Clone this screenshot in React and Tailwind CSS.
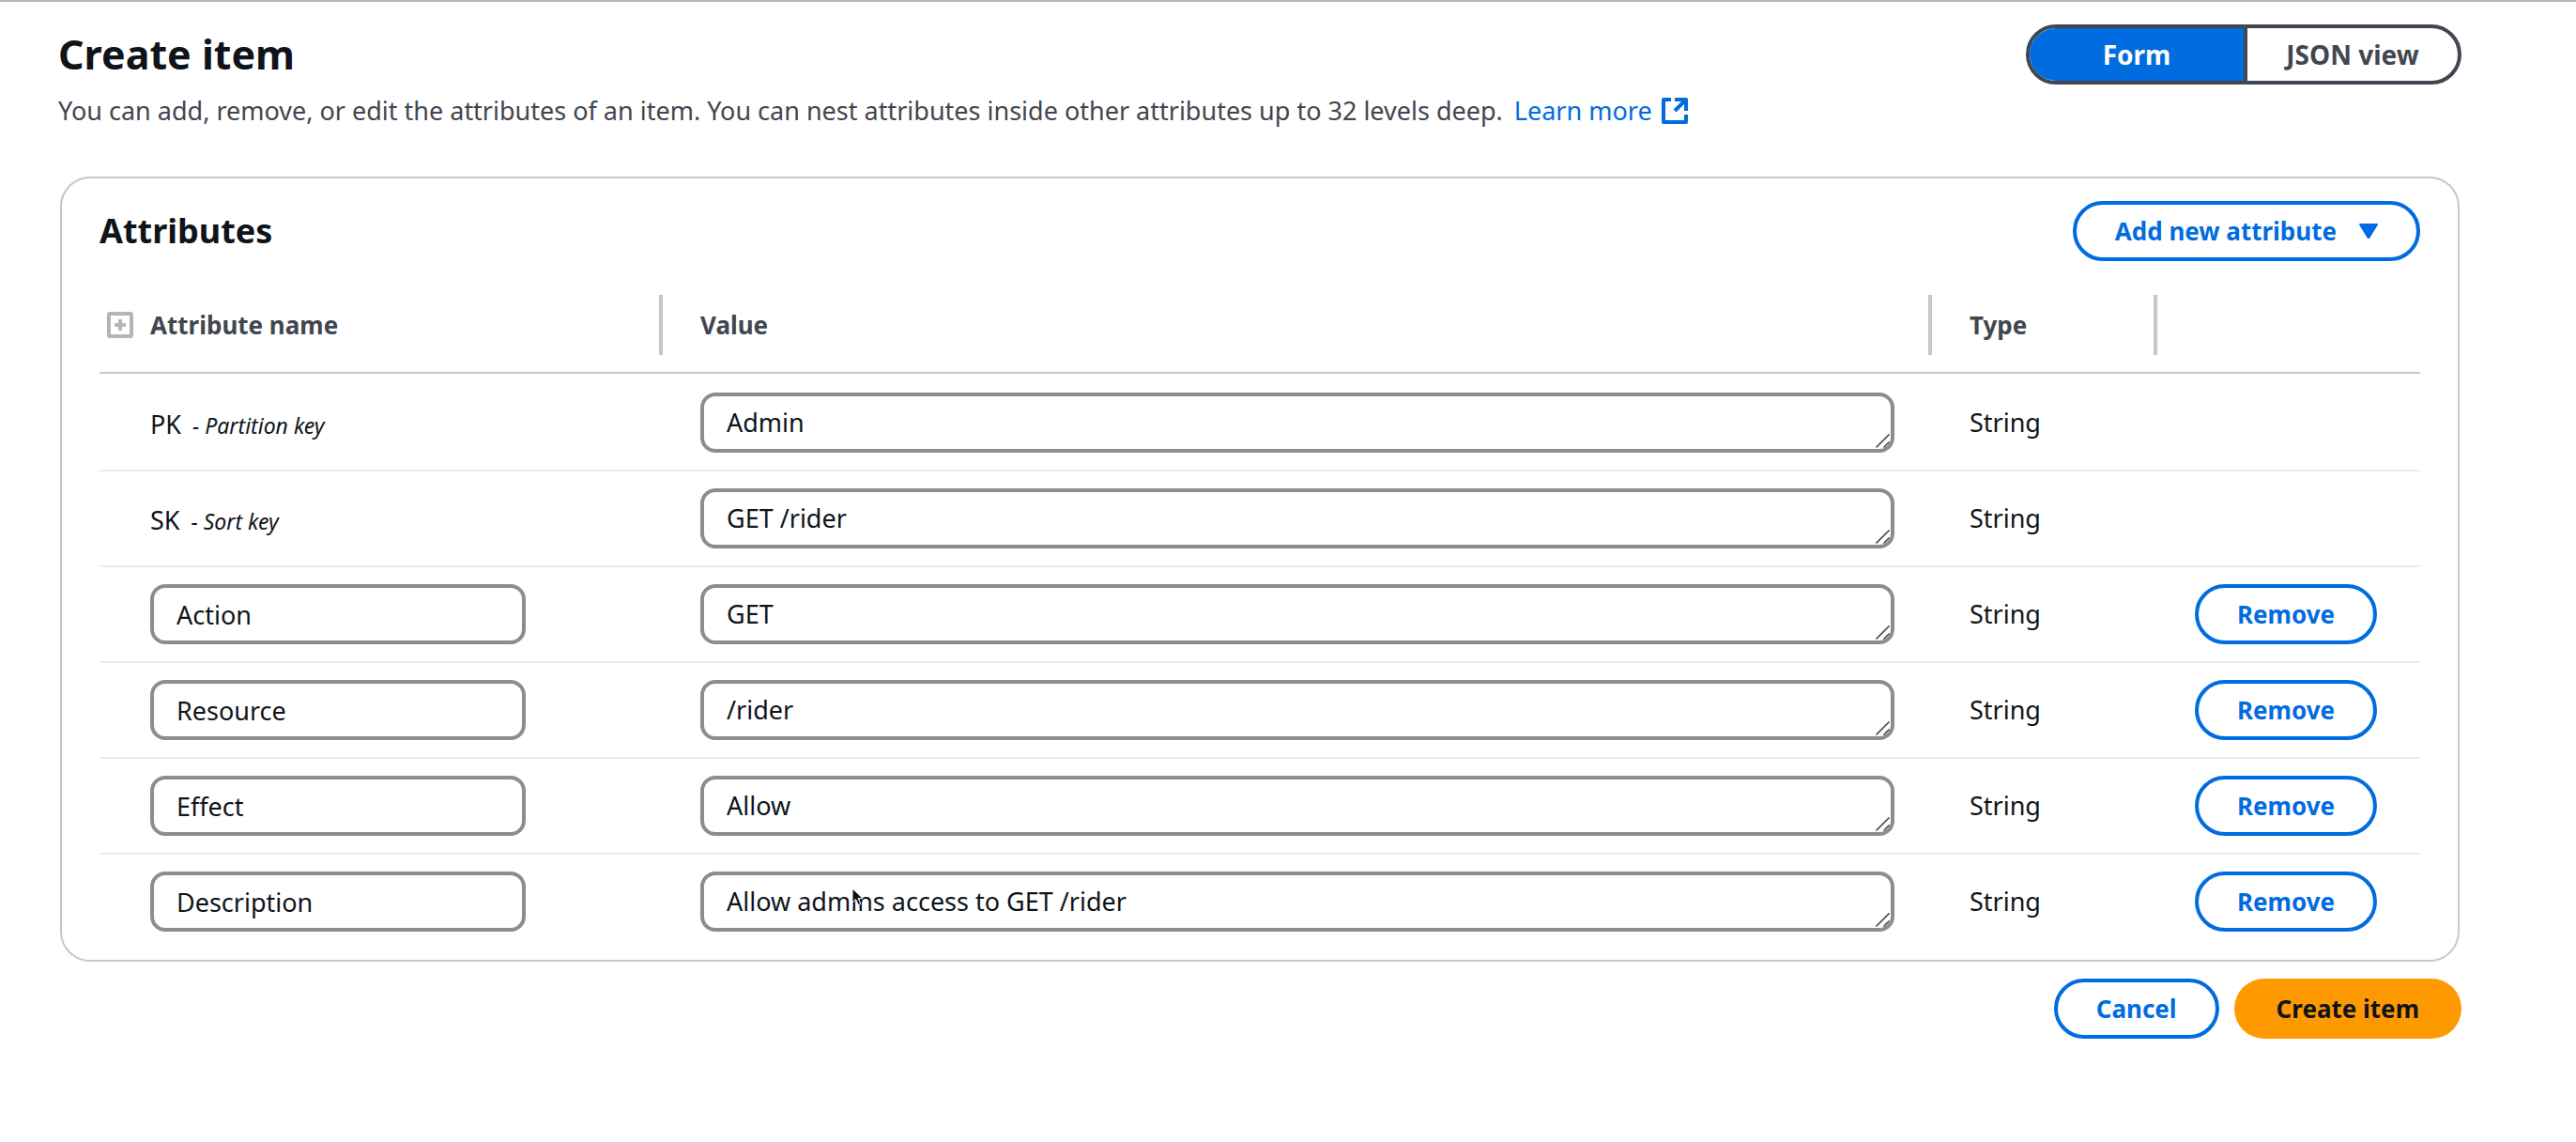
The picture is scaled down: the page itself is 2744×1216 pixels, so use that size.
import React from 'react';

const attributes = [
  { name: 'PK', role: 'Partition key', value: 'Admin' },
  { name: 'SK', role: 'Sort key', value: 'GET /rider' },
  { name: 'Action', value: 'GET' },
  { name: 'Resource', value: '/rider' },
  { name: 'Effect', value: 'Allow' },
  { name: 'Description', value: 'Allow admins access to GET /rider' },
];

function ExternalIcon() {
  return (
    <svg className="h-8 w-8" viewBox="0 0 32 32" fill="none" stroke="currentColor" strokeWidth="4" aria-hidden="true">
      <path d="M12 4H4v24h24v-8" strokeLinejoin="round" />
      <path d="M16 4h12v12" strokeLinejoin="round" />
      <path d="M28 4L16 16" />
    </svg>
  );
}

function ExpandIcon() {
  return (
    <svg className="h-7 w-7" viewBox="0 0 28 28" fill="none" stroke="currentColor" strokeWidth="4" aria-hidden="true">
      <rect x="2" y="2" width="24" height="24" rx="1" />
      <path d="M14 8v12M8 14h12" />
    </svg>
  );
}

function ResizeGrip() {
  return (
    <svg
      className="pointer-events-none absolute right-1 bottom-1 h-4 w-4"
      viewBox="0 0 16 16"
      fill="none"
      stroke="#4a4a4e"
      strokeWidth="1.6"
      aria-hidden="true"
    >
      <path d="M0.5 14.5L14.5 0.5M8.5 14.5L14.5 8.5" />
    </svg>
  );
}

function Pointer() {
  return (
    <svg className="pointer-events-none absolute top-4 left-[160px] h-6 w-4" viewBox="0 0 16 24" aria-hidden="true">
      <path
        d="M2 2v15l3.6-3.4 2.6 6 2.6-1.1-2.6-5.9H13z"
        fill="#111"
        stroke="#fff"
        strokeWidth="1"
        strokeLinejoin="round"
      />
    </svg>
  );
}

function Heading({ children }) {
  return (
    <div className="flex items-center justify-between">
      {children}
      <span className="h-16 w-1 bg-[#c6c6cd]" />
    </div>
  );
}

function OutlineButton({ children }) {
  return (
    <button
      type="button"
      className="flex h-16 items-center gap-6 rounded-full border-4 border-[#006ce0] px-[41px] text-[26px] font-bold whitespace-nowrap text-[#006ce0]"
    >
      {children}
    </button>
  );
}

export default function App() {
  return (
    <div className="border-t-2 border-[#b4b4bb] bg-white pt-6 pr-[122px] pb-10 pl-[62px] font-['Noto_Sans',sans-serif] text-[27px] leading-10 text-[#0f141a]">
      <header className="flex items-start justify-between">
        <div>
          <h1 className="text-[43px] leading-[64px] font-bold">Create item</h1>
          <p className="mt-2 flex items-center text-[#424650]">
            You can add, remove, or edit the attributes of an item. You can nest attributes inside other attributes up
            to 32 levels deep.
            <a href="#learn-more" className="ml-3 flex items-center gap-2 text-[#006ce0]">
              Learn more
              <ExternalIcon />
            </a>
          </p>
        </div>
        <div className="flex h-16 overflow-hidden rounded-full border-4 border-[#424650] text-[28px] font-bold">
          <button type="button" aria-pressed="true" className="w-[232px] border-r-4 border-[#424650] bg-[#006ce0] text-white">
            Form
          </button>
          <button type="button" aria-pressed="false" className="w-[224px] text-[#424650]">
            JSON view
          </button>
        </div>
      </header>

      <section className="mt-[50px] mr-0.5 ml-0.5 rounded-[32px] border-2 border-[#c6c6cd] px-10 pt-6 pb-3">
        <div className="flex items-center justify-between">
          <h2 className="text-[36px] font-bold">Attributes</h2>
          <OutlineButton>
            Add new attribute
            <svg className="h-4 w-5" viewBox="0 0 20 16" fill="currentColor" aria-hidden="true">
              <path d="M1.2 0h17.6a1.1 1.1 0 0 1 .9 1.8L11.4 15.2a1.6 1.6 0 0 1-2.8 0L.3 1.8A1.1 1.1 0 0 1 1.2 0z" />
            </svg>
          </OutlineButton>
        </div>

        <table className="mt-[18px] w-full table-fixed border-separate border-spacing-0 text-left">
          <colgroup>
            <col className="w-[600px]" />
            <col />
            <col className="w-[240px]" />
            <col className="w-[280px]" />
          </colgroup>
          <thead className="text-[26px] text-[#424650]">
            <tr>
              <th className="border-b-2 border-[#c6c6cd] py-[18px] pl-2">
                <Heading>
                  <span className="flex items-center gap-[18px]">
                    <button type="button" aria-label="Expand all" className="text-[#b4b4bb]">
                      <ExpandIcon />
                    </button>
                    Attribute name
                  </span>
                </Heading>
              </th>
              <th className="border-b-2 border-[#c6c6cd] py-[18px] pl-10">
                <Heading>Value</Heading>
              </th>
              <th className="border-b-2 border-[#c6c6cd] py-[18px] pl-10">
                <Heading>Type</Heading>
              </th>
              <th className="border-b-2 border-[#c6c6cd]" aria-label="Actions" />
            </tr>
          </thead>
          <tbody className="[&>tr:first-child>td]:pt-5 [&>tr:last-child>td]:border-b-0 [&>tr>td]:border-b-2 [&>tr>td]:border-[#ebebf0] [&>tr>td]:py-[18px]">
            {attributes.map((k) => (
              <tr key={k.name}>
                <td className="pl-[54px]">
                  {k.role ? (
                    <div className="pt-1">
                      {k.name}
                      <i className="ml-3 text-[23px]">- {k.role}</i>
                    </div>
                  ) : (
                    <input
                      aria-label="Attribute name"
                      defaultValue={k.name}
                      className="block h-16 w-[400px] rounded-2xl border-4 border-[#8c8c94] px-6"
                    />
                  )}
                </td>
                <td className="pr-10 pl-10">
                  <div className="relative">
                    <textarea
                      rows={1}
                      aria-label={k.name + ' value'}
                      defaultValue={k.value}
                      className="block h-16 w-full resize-none overflow-hidden rounded-2xl border-4 border-[#8c8c94] px-6 py-2"
                    />
                    <ResizeGrip />
                    {k.name === 'Description' && <Pointer />}
                  </div>
                </td>
                <td className="pl-10">String</td>
                <td className="pl-10">{!k.role && <OutlineButton>Remove</OutlineButton>}</td>
              </tr>
            ))}
          </tbody>
        </table>
      </section>

      <footer className="mt-[18px] flex justify-end gap-4">
        <OutlineButton>Cancel</OutlineButton>
        <button type="button" className="h-16 rounded-full bg-[#ff9900] px-[45px] text-[26px] font-bold">
          Create item
        </button>
      </footer>
    </div>
  );
}
